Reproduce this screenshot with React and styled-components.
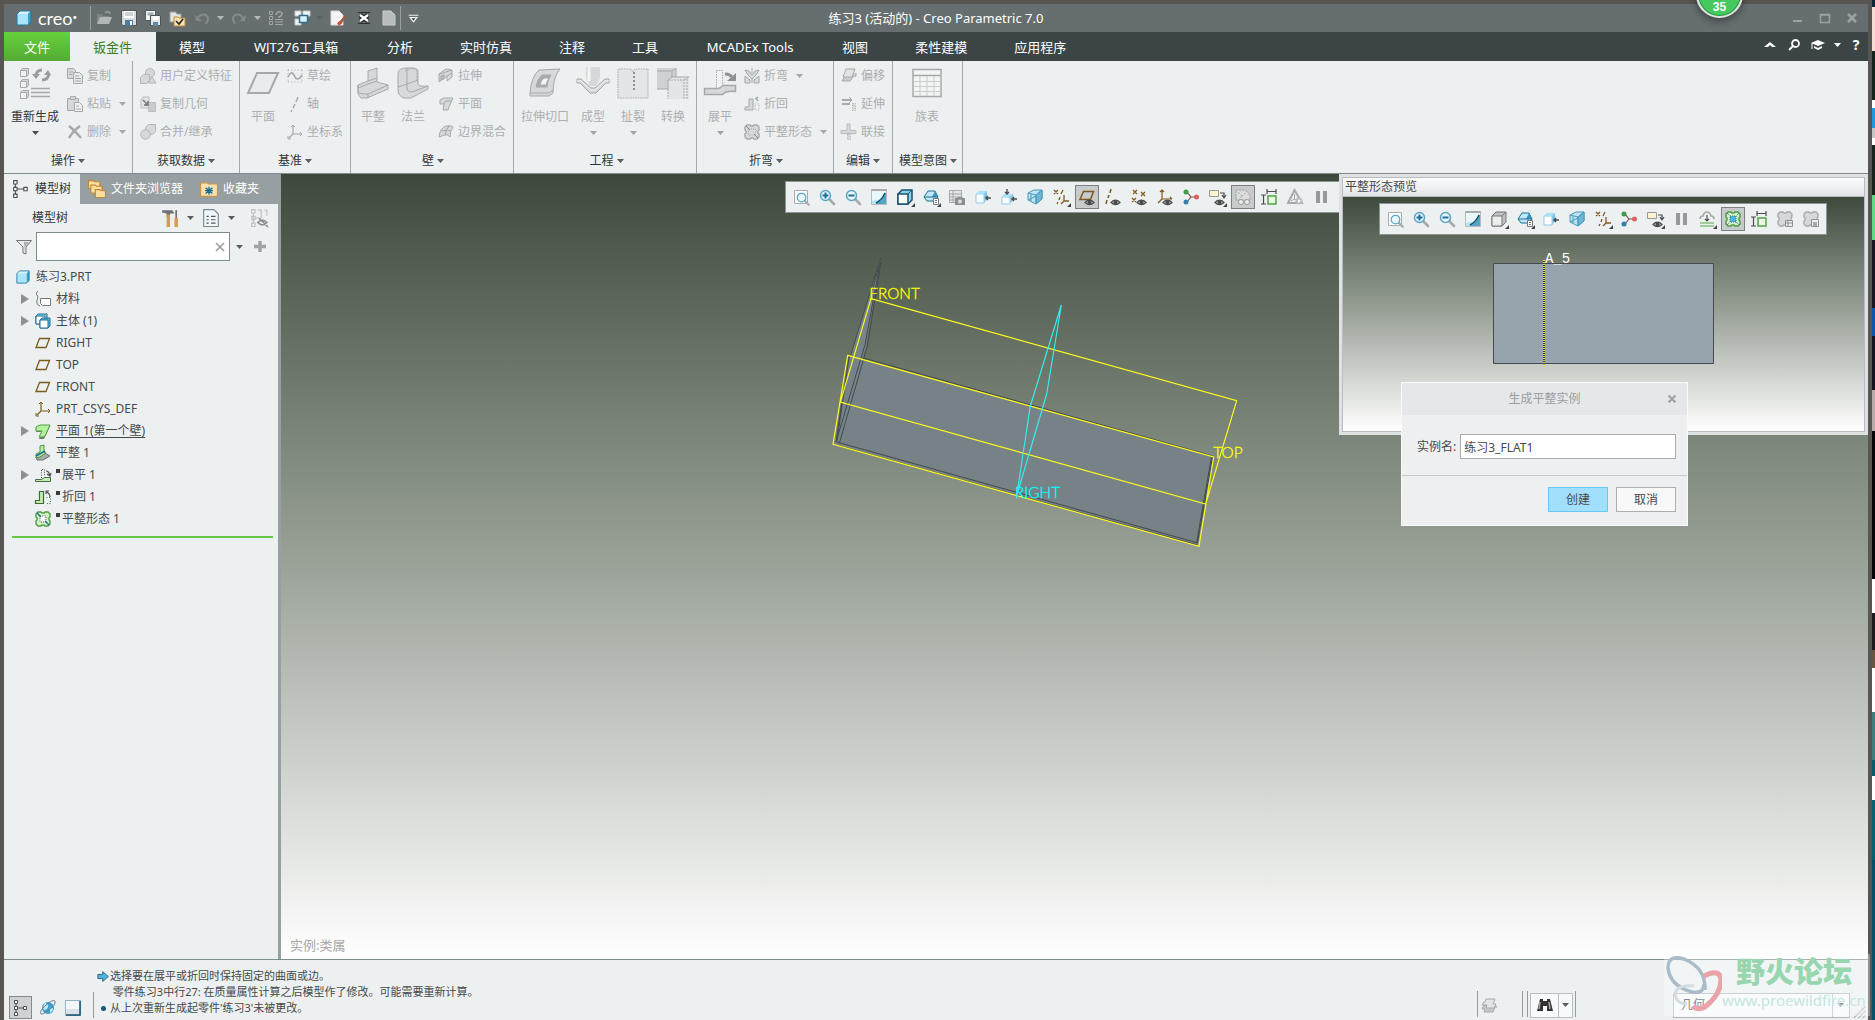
import React from "react";
import styled, { createGlobalStyle } from "styled-components";

const GlobalStyle = createGlobalStyle`
  *, *::before, *::after { box-sizing: border-box; }
  body {
    margin: 0;
    overflow: hidden;
    font-family: "Noto Sans", "Noto Sans CJK SC", sans-serif;
    font-size: 12px;
    line-height: 16px;
    color: #46494a;
    background: #575653;
  }
  button, input, select {
    font: inherit;
    color: inherit;
    margin: 0;
    padding: 0;
    border: 0;
    background: none;
  }
  ul { list-style: none; margin: 0; padding: 0; }
  svg { display: block; flex: none; }
`;

/* ---------- icons ---------- */

const G = "#a6a9aa";
const L = "#d6d9da";
const D = "#4c4c4c";
const BR = "#7d5a1e";
const BL = "#1f6f93";
const SKY = "#a9e2fa";

const miniEye = (
  <g>
    <path d="M6 13.500q4.500-4.500 9 0q-4.500 4-9 0z" fill="#f4f4f4" stroke={D} strokeWidth="1.200" />
    <circle cx="10.500" cy="13.300" r="2" fill={D} />
  </g>
);
const lens = (
  <g>
    <path d="M10 10l5 5" stroke="#a9a9a9" strokeWidth="2.600" strokeLinecap="round" />
    <circle cx="6.500" cy="6.500" r="5" fill="#e9f8ff" stroke="#5aa5c4" strokeWidth="1.500" />
  </g>
);
const flatOutline = "M1 3l2-2h3l1 1h2l1-1h3l2 2v3l-1 1v2l1 1v3l-2 2h-3l-1-1H7l-1 1H3l-2-2v-3l1-1V7L1 6z";

const glyphs = {
  /* title bar */
  cube: <g><path d="M1 4l3-3h11l-3 3z" fill="#d5f2fd" /><path d="M12 4l3-3v11l-3 3z" fill="#3e9fc6" /><path d="M1 4h11v11H1z" fill="#abe5fb" /><path d="M1 4l3-3h11v11l-3 3H1z" fill="none" stroke="#27789d" /></g>,
  open: <g><path d="M1 13V4h5l1 2h6v3" fill="#7f8688" /><path d="M1 14l3-7h12l-3 7z" fill="#b3b6b6" /><path d="M9 3q4-3 5 1" stroke="#9a9e9e" fill="none" strokeWidth="1.500" /></g>,
  save: <g><path d="M.5.5h15v15H2L.5 14z" fill="#d8dadb" stroke="#4d5456" /><path d="M3 1h10v7H3z" fill="#fff" /><path d="M4 3h8M4 5h8" stroke="#9aa3a8" /><path d="M4 10h8v6H4z" fill="#4a7ea0" /><path d="M9 11h2v4H9z" fill="#fff" /></g>,
  saveAs: <g><path d="M.5.5h10v10h-10z" fill="#f1f2f3" stroke="#555c5e" /><path d="M2.500 2.500h6v3h-6z" fill="#9db0bb" /><path d="M5.500 5.500h10v10h-10z" fill="#e4e6e8" stroke="#4d5456" /><path d="M7.500 6h6v4h-6z" fill="#fff" /><path d="M8 12h5v4H8z" fill="#5f8aa5" /></g>,
  folderCheck: <g><path d="M1 2h6l1 2h4v8H1z" fill="#e4e4e2" stroke="#9a9a98" /><path d="M5 7h4l1 1h6v8H5z" fill="#fbe2ae" stroke="#b98b3b" /><path d="M7 11l3 3 4-5" stroke="#222" fill="none" strokeWidth="1.600" /></g>,
  undo: <g fill="none" stroke="#84898a" strokeWidth="2"><path d="M3 9q4-6 9-4q4 3 0 9" /><path d="M1 5l1 6h6z" fill="#84898a" stroke="none" /></g>,
  redo: <g fill="none" stroke="#84898a" strokeWidth="2"><path d="M13 9Q9 3 4 5q-4 3 0 9" /><path d="M15 5l-1 6H8z" fill="#84898a" stroke="none" /></g>,
  regenSmall: <g stroke="#a1a6a6" fill="none"><path d="M1.500 1.500h3v3h-3zM1.500 6.500h3v3h-3zM1.500 11.500h3v3h-3z" /><path d="M7 9.500h8M7 12h8M7 14.500h8" /><path d="M8 5q1-4 5-3M14 2q0 5-4 5" strokeWidth="1.500" /></g>,
  windows: <g><path d="M1 1h6v5H1zM9 1h7v5H9zM1 9h6v6H1z" fill="#f2f4f5" stroke="#c5c9ca" /><path d="M5.500 5.500h8v7h-8z" fill="#d9f2fd" stroke="#2b6f8f" strokeWidth="1.500" /></g>,
  erase: <g><path d="M1 1h8l4 4v10H1z" fill="#f4f4f4" stroke="#d9d9d9" /><path d="M9 12l6-7 2 2-6 7z" fill="#9b5e47" /><path d="M7 13l3-2 2 2-3 3z" fill="#d5453c" /></g>,
  closeWin: <g><path d="M4 5l8 6M12 5l-8 6" stroke="#2c2f30" strokeWidth="5" /><path d="M4 5l8 6M12 5l-8 6" stroke="#fff" strokeWidth="2.200" /><path d="M2 2.500h12M2 13.500h12" stroke="#2c2f30" /></g>,
  newDoc: <path d="M2 1h8l4 4v10H2z" fill="#b9bcbc" stroke="#cbcdcd" />,
  overflow: <path d="M2 4h12M4 7l4 5 4-5z" stroke="#f2f2f2" strokeWidth="1.500" fill="#333" />,
  minimize: <path d="M3 11h9" stroke="#9da2a2" strokeWidth="2" />,
  maximize: <path d="M3.500 4.500h9v8h-9zM3 5h10" stroke="#9da2a2" strokeWidth="1.500" fill="none" />,
  closeX: <path d="M4 4l8 8M12 4l-8 8" stroke="#a0a3a4" strokeWidth="2.500" />,
  up: <path d="M2 10l6-5 6 5H10L8 8 6 10z" fill="#fff" />,
  search: <g fill="none" stroke="#fff"><circle cx="9.500" cy="6.500" r="3.500" strokeWidth="1.800" /><path d="M7 9l-4 4" strokeWidth="2" /></g>,
  learn: <g fill="#fff"><path d="M8 3l7 3-7 3-7-3z" /><path d="M4 9l4 2 4-2v2l-4 2-4-2z" /><path d="M2 6v6" stroke="#fff" /></g>,

  /* ribbon, small */
  copy: <g fill={L} stroke={G}><path d="M.5.5h6l2 2v8h-8z" /><path d="M6.500 4.500h6l3 3v8h-9z" fill="#e6e8e9" /><path d="M8 8h4M8 10.500h6M8 13h6M2 4h4M2 6.500h3" fill="none" /></g>,
  paste: <g fill={L} stroke={G}><path d="M.5 2.500h11v12H.5z" /><path d="M3.500.5h5v3h-5z" /><path d="M7.500 6.500h5l3 3v6h-8z" fill="#eef0f0" /><path d="M9 10h3M9 13h5" /></g>,
  remove: <path d="M2 2q5 4 12 12M13 2Q6 7 2 14" fill="none" stroke={G} strokeWidth="2.500" />,
  udf: <g fill={L} stroke="#b3b6b7"><circle cx="10" cy="5" r="4.500" /><path d="M.5 9.500l3-3h6v6l-3 3h-6z" /><path d="M8 15l4-6 4 6z" /></g>,
  copyGeom: <g fill="#e1e3e4" stroke="#bbbebf"><path d="M1 4l2-3h6v11H1z" /><path d="M8.500 6.500h7v9h-7z" fill="#c9cccd" /><path d="M3 4l5 5M8 5v4H4" stroke="#6f7273" strokeWidth="1.400" fill="none" /></g>,
  merge: <g fill={L} stroke="#b3b6b7"><path d="M5.500 3.500l3-3h7v7l-3 3h-7z" /><circle cx="5.500" cy="10.500" r="4.800" /></g>,
  sketch: <g fill="none" stroke={G}><path d="M1 2h14M1 14h14M1 2v12M15 2v12" strokeDasharray="1 2.200" /><path d="M1 9q3-7 6-2q3 8 8 0" strokeWidth="1.600" /></g>,
  axis: <path d="M11 1L9 6M8 8l-2 4M5 14l-1 2" stroke={G} strokeWidth="1.500" fill="none" />,
  csys: <g stroke={G} fill="none" strokeWidth="1.200"><path d="M6 1v9h9M6 10l-4 4" /><path d="M4 3l2-2 2 2M13 8l2 2-2 2M1 12v3h3" strokeWidth="1" /></g>,
  extrude: <g fill={L} stroke={G}><path d="M1 6l7-5 6 1v7l-5 4V8L1 14z" /><path d="M1 6l4-1 9-3M9 8l5-3" fill="none" /><path d="M3 8l3-1v4l-3 1z" fill="#b9bcbd" /></g>,
  planar: <g fill={L} stroke={G}><path d="M2 4l4-2h9l-4 9-1 3H5l1-6H2z" /><path d="M6 8l2-3h6" fill="none" /></g>,
  blend: <g fill={L} stroke={G}><path d="M1 13Q2 4 8 2q5-1 7 1q-3 4-3 10q-2-3-5-2q-3 1-6 2z" /><path d="M7 11q1-6 4-9M4 7q5-2 9 0" fill="none" /></g>,
  bend: <g fill={L} stroke={G}><path d="M1 2l4 1 3 4 3-4 4-1-3 5-4 4-4-4z" /><path d="M1 8l5 4v3H1zM15 8l-5 4v3h5zM8 11v4M8 0v5" /></g>,
  bendBack: <g fill={L} stroke={G}><path d="M1 11h4V3h4v11H1z" /><path d="M11 8h4v6h-4z" strokeDasharray="1 1.500" fill="none" /><path d="M12 2l2 3M11 3l3-2" strokeWidth="1.500" /></g>,
  flatPattern: <g fill={L} stroke={G}><path d={flatOutline} strokeWidth="1.400" /><path d="M4.500 5h7v6h-7z" fill="none" strokeDasharray="1 1.300" /><path d="M2 2l4 4M10 10l4 4" stroke="#888" /></g>,
  offset: <g fill={L} stroke={G}><path d="M4 8l-3 5h8l4-5h2V5" fill="#c9cccd" /><path d="M5 1h9l-3 8H2z" fill="#e1e3e4" /></g>,
  extend: <g fill="none" stroke={G}><path d="M1 4h9M1 8h8" strokeWidth="2" /><path d="M8 1l3 3-3 3" /><path d="M11.500 7.500h3v7h-3z" strokeDasharray="1 1.500" fill={L} /></g>,
  join: <g fill={L} stroke={G}><path d="M0 6.500h6V0h3v6.500h6v3H0z" stroke="#b9bcbd" /><path d="M6.500 10.500h3v5h-3z" strokeDasharray="1 1.500" /></g>,

  /* navigator */
  tree: <g fill="#fff" stroke={D}><path d="M3 3v10M4 8h8" fill="none" /><path d="M1.500.5h3v3h-3zM1.500 6.500h3v3h-3zM1.500 12.500h3v3h-3zM10.500 6.500h3v3h-3z" /></g>,
  folders: <g fill="#fbdf9f" stroke="#c0873a"><path d="M.5.5h4l1 1h5v6H.5z" /><path d="M2.500 4.500h4l1 1h5v6h-10z" /><path d="M6.500 8.500h4l1 1h4v6h-9z" /></g>,
  favorites: <g><path d="M.5 2.500h6l1 1h8v11H.5z" fill="#f8e1ae" stroke="#c5954c" /><path d="M8 6v7M5 7l6 5M11 7l-6 5M4.500 9.500h7" stroke={BL} strokeWidth="1.200" /></g>,
  tools: <g><path d="M1 1h9l2 3H8v3H5V4L1 3z" fill="#6e7173" /><path d="M5 5h3v11H5z" fill="#d49a4d" /><path d="M13.500 1v7" stroke="#707070" strokeWidth="1.500" /><path d="M12 8h3v8h-3z" fill="#d49a4d" /></g>,
  list: <g><path d="M1.500.5h9l4 4v11h-13z" fill="#eef7fc" stroke="#7f8688" /><path d="M4 6h2v1H4zM4 9h2v1H4zM4 12h2v1H4zM8 6h4v1H8zM8 9h4v1H8zM8 12h4v1H8z" fill="#555" /></g>,
  treeEye: <g fill="none" stroke="#bcc0c1"><path d="M1.500.5h3v3h-3zM1.500 6.500h3v3h-3zM1.500 12.500h3v3h-3zM3 3v10M7 1h3v7M13 1h2v5M4 8h4" /><path d="M7 12q4-4 8 0q-4 4-8 0zM8 8l8 8" stroke="#8b8e8f" strokeWidth="1.500" /></g>,
  filter: <g><path d="M.5 1.500h15L10 8v7l-3-1V8z" fill="#e9ebec" stroke="#727677" /><path d="M8 3h5L9 8v5" fill="#a9adae" /></g>,
  plus: <path d="M8 2v11M2 7.500h12" stroke="#a0a3a4" strokeWidth="3.500" />,
  clear: <path d="M4 4l8 8M12 4l-8 8" stroke="#9b9b9b" strokeWidth="1.500" />,
  material: <g fill="none" stroke="#777"><path d="M5.500 7.500h10v7h-8l-2-2z" fill="#fff" /><path d="M3 0q-3 2-1 4q2 2 0 5q-1 5 3 6" /></g>,
  body: <g stroke={BL} fill="#fff"><path d="M1 3l2-2h9v8l-2 2H1z" fill="#8fd3ef" /><path d="M1 3h9v8H1z" /><path d="M5 7l2-2h8v8l-2 2H5z" fill="#5cb7db" /><path d="M5 7h8v8H5z" /></g>,
  plane: <path d="M4.500 3.500h10l-3.500 9H1z" fill="none" stroke={BR} strokeWidth="1.300" />,
  csysBrown: <g stroke={BR} fill="none" strokeWidth="1.200"><path d="M6 1v9h9M6 10l-4 4" /><path d="M4 3l2-2 2 2M13 8l2 2-2 2M1 12v3h3" strokeWidth="1" /></g>,
  wall: <g><path d="M1 5l4-2h10l-4 9-2 4H4l3-7H1z" fill="#777b7c" /><path d="M1 4l4-2h10l-4 9-2 3H4l3-6H1z" fill="#b5f09b" stroke="#4f9a46" /></g>,
  flat: <g><path d="M1 12l9-4 5 3-7 4H2z" fill="#a7abac" stroke="#6b6f70" /><path d="M5 1l4-1v7l2 1-6 4-4 1V9l4-2z" fill="#b8efa2" stroke="#4f8e47" /><path d="M1 11l9-5" stroke={BL} strokeWidth="1.500" /></g>,
  unbend: <g><path d="M.5 12.500h6l3-2h6v4H.5z" fill="#c4efb2" stroke="#4d6a48" /><path d="M6.500 11V2.500h3v7" fill="none" stroke={D} strokeDasharray="1 1.300" /><path d="M11 4q3 0 4 5M12 7l3 2 1-3" fill="none" stroke={D} strokeWidth="1.200" /></g>,
  bendBackGreen: <g><path d="M.5 11.500h4v-9h4v12h-8z" fill="#c4efb2" stroke="#3f6a3a" strokeWidth="1.200" /><path d="M11.500 8.500h4v6h-5" fill="none" stroke="#4f7a4a" strokeDasharray="1 1.500" /><path d="M15 8q0-3-3-5M11 5V2h3" fill="none" stroke={D} strokeWidth="1.200" /></g>,
  flatGreen: <g><path d={flatOutline} fill="#d3f5c6" stroke="#4f9a46" strokeWidth="1.400" /><path d="M5 5h6v6H5z" fill="#fff" stroke={D} strokeDasharray="1 1.300" /><path d="M2 2l4 4M10 10l4 4" stroke={BL} strokeWidth="1.400" /></g>,

  /* view toolbars */
  zoomBox: <g><path d="M1.500 1.500h13v13h-13z" fill="#fff" stroke="#aaa" /><g transform="translate(3 3) scale(.85)">{lens}</g></g>,
  zoomIn: <g>{lens}<path d="M3.500 6.500h6M6.500 3.500v6" stroke={BL} strokeWidth="2" /></g>,
  zoomOut: <g>{lens}<path d="M3.500 6.500h6" stroke={BL} strokeWidth="2" /></g>,
  repaint: <g><path d="M.5.5h15v15H.5z" fill="#b6e5f8" stroke="#bbb" /><path d="M1 1h14v3q-4 6-9 7q-3 0-5 1z" fill="#e9f7fd" /><path d="M15 3v12H4q7-2 11-12z" fill="#4fa6c9" /><path d="M14 4q-3 7-9 10" stroke="#194c66" fill="none" strokeWidth="1.500" /><path d="M.5 1h15" stroke="#aaa" strokeWidth="2" /></g>,
  shaded: <g><path d="M1 5l4-4h10v10l-4 4H1z" fill="#8fd0ea" stroke="#1a536e" strokeWidth="1.500" /><path d="M1 5h10v10H1z" fill="#fff" stroke="#1a536e" strokeWidth="1.500" /><path d="M11 5l4-4" stroke="#1a536e" /></g>,
  shadedGray: <g><path d="M1 5l4-4h10v10l-4 4H1z" fill="#bfc2c3" stroke="#777" /><path d="M1 5h10v10H1z" fill="#eceeee" stroke="#777" /><path d="M11 5l4-4" stroke="#777" /></g>,
  savedView: <g><path d="M1 8l4-6h7l3 6-3 4H4z" fill="#bfe9fa" stroke={BL} /><path d="M9 8l3-6 3 6z" fill="#3c95bd" /><path d="M1 8h14" stroke={BL} /><path d="M10.500 9.500h5v6h-5z" fill="#fff" stroke="#777" /><path d="M12 11.500h2M12 13.500h2" stroke="#777" /></g>,
  viewMgr: <g><path d="M.5 1.500h12v12H.5z" fill="#e4e6e7" stroke={G} /><path d="M.5 5h12M.5 8h12M.5 11h12M4 2v12" stroke={G} /><path d="M6 9h2l1-1h4l1 1h2v7H6z" fill="#8d9091" /><circle cx="11" cy="12.500" r="2" fill="#ddd" /></g>,
  cubeArrow: <g><path d="M1 5l3-3h8v8l-3 4H1z" fill="#7fc6e6" /><path d="M1 5h8v9H1z" fill="#fff" stroke="#8fcde6" /><path d="M1 5l3-3h8l-3 3z" fill={SKY} /><path d="M16 9h-5M13 7l-2 2 2 2" stroke={D} strokeWidth="1.500" fill="none" /></g>,
  cubeArrows: <g><path d="M1 8l3-3h8v6l-3 4H1z" fill="#7fc6e6" /><path d="M1 8h8v7H1z" fill="#fff" stroke="#8fcde6" /><path d="M1 8l3-3h8l-3 3z" fill={SKY} /><path d="M16 10h-5M13 8l-2 2 2 2M6 0v5M4 3l2 2 2-2" stroke={D} strokeWidth="1.400" fill="none" /></g>,
  perspective: <g stroke="#4a9abd"><path d="M1 4l6-3h8v9l-6 5-8-4z" fill="#bde4f3" /><path d="M9 6l6-5v9l-6 5z" fill="#6fb6d4" /><path d="M1 4l8 2 6-5M9 6v9M4 5v7M1 11l8-4" fill="none" /></g>,
  datum: <g stroke={BR} fill="none" strokeWidth="1.300"><path d="M1 1l4 4M5 1L1 5M10 1L8 5M7 8l-1 3M5 13l-1 2M11 6v6h5M11 12l-3 3" /></g>,
  planeEye: <g><path d="M4.500 2.500h10l-3 8H1z" fill="none" stroke={BR} strokeWidth="1.500" />{miniEye}</g>,
  axisEye: <g><path d="M6 0L5 4M4 6l-1 3M2 11l-1 4" stroke={BR} strokeWidth="1.500" />{miniEye}</g>,
  pointEye: <g><path d="M2 1l4 4M6 1L2 5M10 3l4 4M14 3l-4 4M1 9l4 4M5 9l-4 4" stroke={BR} strokeWidth="1.300" />{miniEye}</g>,
  csysEye: <g><path d="M5 1v9h10M5 10l-4 4M3 3l2-2 2 2M13 8l2 2" stroke={BR} strokeWidth="1.200" fill="none" />{miniEye}</g>,
  spin: <g><path d="M4 3l4 5h5M4 13l4-5" stroke="#7a4b4b" fill="none" strokeWidth="1.200" /><circle cx="3" cy="3" r="2.500" fill="#3f9a4b" /><circle cx="13.500" cy="8" r="2.500" fill="#e0605f" /><circle cx="3" cy="13" r="2.500" fill="#3382ad" /></g>,
  annotation: <g><path d="M.5 1.500h9v6h-9z" fill="#fdf3d0" stroke="#999" /><path d="M11 4h4v4M13 6l2 3 2-3" stroke={D} fill="none" strokeWidth="1.200" />{miniEye}</g>,
  simulate: <g fill="none" stroke="#999"><path d="M1 1h8q5 2 6 6v4H1z" strokeDasharray="2 1" fill="#ddd" /><path d="M3 3l4 4 4-3M7 7l-3 3" strokeDasharray="1 1" /><circle cx="6" cy="13" r="2.500" fill="#eee" /><circle cx="12" cy="13" r="2.500" fill="#eee" /></g>,
  dims: <g fill="none" stroke={D}><path d="M6 0v5M15 0v5M6 2.500h9M0 6h5M0 15h5M2.500 6v9" strokeWidth="1.200" /><path d="M7 7h8v8H7z" fill="#eaf9e3" stroke="#54a146" strokeWidth="1.500" /></g>,
  triangle: <g><path d="M7.500 1L15 14H1z" fill="none" stroke={G} strokeWidth="2" /><path d="M7.500 5v5M4 12l3-2 4 2" stroke={G} fill="none" /><circle cx="12" cy="12" r="3.500" fill="#bbb" /><path d="M11 10l3 2-3 2z" fill="#fff" /></g>,
  pause: <path d="M3 2h4v12H3zM10 2h4v12h-4z" fill="#959a9b" />,
  bendOrder: <g fill="none"><path d="M1 8q0-3 3-3q1-4 4-4t4 4q3 0 3 3" stroke="#a5a8a5" strokeWidth="1.600" /><path d="M8 4v6M6 8l2 2 2-2" stroke={D} strokeWidth="1.200" /><path d="M1 12h14M1 15h14" stroke="#55a548" strokeWidth="1.200" /></g>,
  flatActive: <g><path d={flatOutline} fill="#d3f5c6" stroke="#4f9a46" strokeWidth="1.500" /><path d="M5 5h6v6H5z" fill="#4cb4e8" stroke={BL} strokeDasharray="1 1" /><path d="M2 2l3 3M11 11l3 3M14 2l-3 3M2 14l3-3" stroke={BL} strokeDasharray="1 1" /></g>,
  flatTable: <g><path d={flatOutline} fill={L} stroke={G} strokeWidth="1.300" /><path d="M8.500 9.500h7v6h-7zM8 12h8M11 9v7" fill="#eee" stroke="#8f9293" /></g>,
  flatSave: <g><path d={flatOutline} fill={L} stroke={G} strokeWidth="1.300" /><path d="M8.500 8.500h7v7h-7z" fill="#eee" stroke="#8f9293" /><path d="M10 11h4v4h-4z" fill="#aaa" /></g>,

  /* status bar */
  globe: <g><circle cx="8" cy="8" r="6" fill="#3d9fd0" /><path d="M5 3q4 1 3 4t-4 3q-2-3 1-7zM10 8q3-1 3 1t-3 4z" fill="#c6e8f6" /><path d="M1 14Q-1 11 6 5t9-4q1 4-6 9t-8 4z" fill="none" stroke="#6b7c88" /></g>,
  blank: <g><path d="M.5.5h15v15H.5z" fill="#f4f8fa" stroke="#8fb3c4" /><path d="M1 9h14v6H1z" fill="#d9e2e7" /><path d="M15 1v14H1" stroke="#12506f" strokeWidth="1.500" fill="none" /></g>,
  arrowRight: <path d="M1 5.500h6V2l7 6-7 6v-3.500H1z" fill="#53b4dc" stroke="#155a7c" />,
  geometry: <g fill={L} stroke={G}><path d="M3 8l-2 4h3l-1 3h9l2-5h2l-2-2z" fill="#c6c9ca" /><path d="M5 2h9l-2 5h3l-2 4H5l1-3H1l2-3h1z" fill="#e3e5e6" /></g>,
  binoculars: <g><path d="M3 2h3v2h4V2h3l3 12h-6V9H6v5H0z" fill="#333" /><path d="M3 5l-1 7M12 5l1 7" stroke="#aaa" strokeWidth="1.500" /></g>,
  grip: <path d="M15 2L2 15M15 7l-8 8M15 12l-3 3" stroke="#b4b8b9" strokeWidth="1.500" />,
  regenerate: <g stroke={G}><path d="M1.500 3.500l2-2h6v6l-2 2h-6zM1.500 14.500l2-2h6v6l-2 2h-6zM1.500 25.500l2-2h6v6l-2 2h-6z" fill="#d4d7d8" /><path d="M1.500 3.500h6v6h-6zM1.500 14.500h6v6h-6zM1.500 25.500h6v6h-6z" fill="#f0f1f1" /><path d="M12 21.500h19M12 25.500h19M12 29.500h19" strokeWidth="1.500" /><path d="M17 8q1-5 6-5M30 7q-1 6-7 6" strokeWidth="3" stroke="#9b9e9f" fill="none" /><path d="M13 7h8l-4 5zM25 8h7l-3-5z" fill="#9b9e9f" stroke="none" /></g>,
  bigPlane: <path d="M10 6h21l-9 20H1z" fill="#e9eced" stroke={G} strokeWidth="2" />,
  bigFlat: <g fill={L} stroke={G}><path d="M1 18l10-4V4l9-3v14l11 3v4L10 31H4l-3-4z" /><path d="M1 18v6q1 3 5 3h5l20-9M11 14l9-3M11 31v-4M1 21l10-4 9-3" fill="none" /></g>,
  bigFlange: <g fill={L} stroke={G}><path d="M1 7q0-6 8-6h7q5 0 5 4v12q1 3 10 2v3L14 31H7q-6-2-6-8z" /><path d="M10 1v20q0 4 5 4l16-6M1 20l9-3 11-4" fill="none" /><path d="M8 4q8-5 12 0v9" fill="none" strokeDasharray="2 1" /></g>,
  bigCut: <g fill={L} stroke={G}><path d="M10 3l21-1q-7 8-7 24l-4 3H1v-3Q2 10 10 3z" /><path d="M1 26h19l4-3" fill="none" /><path d="M13 8h9q-4 6-4 12H7q1-8 6-12z" fill="#a9acad" /><path d="M15 11h5q-2 3-3 7h-6q1-5 4-7z" fill="#f4f5f5" /></g>,
  bigForm: <g fill={L} stroke={G}><path d="M9 0h14v11l-4 8h-6l-4-8z" stroke="none" /><path d="M12 0v14" stroke="#f2f3f3" strokeWidth="3" /><path d="M0 12h4l10 9h4l10-9h4v4h-3L19 26h-6L3 16H0z" /><path d="M0 14h4l10 9h4l10-9h4" fill="none" stroke="#f2f3f3" /></g>,
  bigRip: <g fill="#e3e5e6" stroke={G}><path d="M1 2h13l2 3 2-3h13v29H1z" stroke="none" /><path d="M1 31V2h13l2 3 2-3h13v29z" strokeDasharray="1.500 1" /><path d="M17 5v18" stroke="#8f9293" strokeWidth="2" strokeDasharray="2 2" /></g>,
  bigConvert: <g fill={L} stroke={G}><path d="M0 1h19v9l-8 4v8H0z" fill="#cfd1d2" stroke="none" /><path d="M11 13l4-3h17v22H11z" fill="#e3e5e6" stroke="none" /><path d="M0 4h15v6M15 4l4-3v9M0 22h11V13l4-3h17" fill="none" /><path d="M11 13h16v19M27 13l5-3M30 12v20M11 22v10" fill="none" strokeDasharray="2 1" /></g>,
  bigUnbend: <g fill={L} stroke={G}><path d="M.5 21.500h14q3-1 4-3h13v6q-10-1-13 3H.5z" strokeWidth="1.500" /><path d="M12.500 21V3.500h6V18" strokeDasharray="1.500 1" fill="#f1f2f2" /><path d="M21 7q6 0 8 5" fill="none" stroke="#8f9293" strokeWidth="3" /><path d="M23 14h9V6z" fill="#8f9293" stroke="none" /></g>,
  bigTable: <g fill="#f3f4f4" stroke={G}><path d="M2 2.500h28v27H2z" strokeWidth="1.500" /><path d="M2 8.500h28" strokeWidth="1.500" /><path d="M2 14.500h28M2 19.500h28M2 24.500h28M9 9v20M16 9v20M23 9v20" fill="none" stroke="#c9cccd" /></g>,
};

const Icon = ({ name, size = 16, box = 16 }) => (
  <svg width={size} height={size} viewBox={`0 0 ${box} ${box}`} overflow="visible" aria-hidden="true">
    {glyphs[name]}
  </svg>
);

const Caret = ({ color = "#5a5c5d" }) => (
  <svg width="7" height="4" viewBox="0 0 7 4" aria-hidden="true"><path d="M0 0h7L3.500 4z" fill={color} /></svg>
);

/* ---------- frame ---------- */

const Desktop = styled.div`
  display: flex;
  height: 100vh;
`;
const Window = styled.div`
  flex: 1;
  min-width: 0;
  display: flex;
  flex-direction: column;
  padding: 4px 4px 0;
  background: #575653;
`;
const DesktopEdge = styled.div`
  width: 3px;
  background: linear-gradient(
    #0a2733 0 7px, #f6dcd4 7px 51px, #14241b 51px 100px, #fff 100px 108px, #1e98e0 108px 128px,
    #c5c5c5 128px 138px, #fff 138px 145px, #16241c 145px 195px, #62d985 195px 240px, #191722 240px 308px,
    #0c57ad 308px 336px, #16141f 336px 390px, #b9aba9 390px 431px, #06060a 431px 579px, #fff 579px 613px,
    #1d1a20 613px 650px, #66563f 650px 668px, #fff 668px 712px, #3f7f7d 712px 760px, #0a5c69 760px 776px,
    #fff 776px 800px, #05616e 800px 860px, #045068 860px
  );
`;

/* ---------- title bar ---------- */

const TitleBar = styled.header`
  display: grid;
  grid-template-columns: 1fr auto 1fr;
  align-items: center;
  height: 28px;
  background: #666e6f;
  color: #fff;
`;
const QuickAccess = styled.div`
  display: flex;
  align-items: center;
  height: 100%;
  padding-left: 12px;
`;
const Brand = styled.span`
  width: 52px;
  margin-left: 6px;
  font: 400 18px/24px Lato, sans-serif;
  sup { font-size: 8px; line-height: 8px; vertical-align: 5px; }
`;
const BarRule = styled.span`
  width: 1px;
  height: 24px;
  background: #9aa0a0;
`;
const QuickButton = styled.button`
  display: flex;
  align-items: center;
  justify-content: center;
  width: ${(p) => p.$w || 24}px;
  height: 24px;
`;
const WindowTitle = styled.h1`
  margin: 0;
  font-size: 13px;
  font-weight: 400;
  line-height: 20px;
`;
const WindowControls = styled.div`
  display: flex;
  justify-content: flex-end;
  gap: 3px;
  padding-right: 4px;
`;
const Badge = styled.div`
  position: absolute;
  top: -29px;
  right: 132px;
  width: 47px;
  height: 47px;
  padding-top: 26px;
  border: 2px solid #dfe6df;
  border-radius: 50%;
  background: #45c95f;
  box-shadow: inset 0 0 0 1px #2a8c42, 0 3px 8px rgba(0, 0, 0, 0.4);
  color: #fff;
  text-align: center;
  font: 700 12px/16px "Liberation Sans", sans-serif;
`;

const quickItems = [
  ["open", 26, "打开"], ["save", 24, "保存"], ["saveAs", 24, "另存为"], ["folderCheck", 24, "工作目录"],
  ["undo", 26, "撤消"], ["caret", 10, "撤消列表"], ["redo", 28, "重做"], ["caret", 8, "重做列表"],
  ["regenSmall", 30, "重新生成"], ["windows", 22, "窗口"], ["darkCaret", 12, "窗口列表"], ["erase", 26, "拭除"],
  ["closeWin", 26, "关闭"], ["newDoc", 23, "新建"],
];

function TitleSection() {
  return (
    <TitleBar>
      <QuickAccess>
        <Icon name="cube" />
        <Brand>creo<sup>•</sup></Brand>
        <BarRule />
        {quickItems.map(([name, w, label], i) => (
          <QuickButton key={i} $w={w} aria-label={label}>
            {name === "caret" ? <Caret color="#b5b9b9" /> : name === "darkCaret" ? <Caret color="#5a6061" /> : <Icon name={name} />}
          </QuickButton>
        ))}
        <BarRule />
        <QuickButton aria-label="自定义"><Icon name="overflow" size={13} /></QuickButton>
      </QuickAccess>
      <WindowTitle>练习3 (活动的) - Creo Parametric 7.0</WindowTitle>
      <WindowControls>
        <QuickButton aria-label="最小化"><Icon name="minimize" /></QuickButton>
        <QuickButton aria-label="最大化"><Icon name="maximize" /></QuickButton>
        <QuickButton aria-label="关闭窗口"><Icon name="closeX" /></QuickButton>
      </WindowControls>
    </TitleBar>
  );
}

/* ---------- ribbon ---------- */

const TabBar = styled.nav`
  display: flex;
  height: 29px;
  background: #3c4546;
`;
const Tab = styled.button`
  min-width: ${(p) => p.$w || 0}px;
  padding: ${(p) => (p.$kind === "file" ? "0 20px" : "0 24px 0 23px")};
  font-size: 13px;
  line-height: 28px;
  color: ${(p) => (p.$kind === "active" ? "#3c7d22" : "#fff")};
  background: ${(p) =>
    p.$kind === "file" ? "linear-gradient(#65d13c, #55ab34)" : p.$kind === "active" ? "#ecf0f1" : "none"};
  white-space: nowrap;
`;
const TabTools = styled.div`
  display: flex;
  align-items: center;
  margin-left: auto;
  padding-bottom: 4px;
  color: #fff;
`;
const Help = styled.span`
  font-size: 14px;
  font-weight: 700;
`;
const RibbonBar = styled.div`
  display: flex;
  height: 113px;
  background: #ecf0f1;
  border-bottom: 1px solid #7d8c8c;
`;
const Group = styled.section`
  display: flex;
  flex-direction: column;
  width: ${(p) => p.$w}px;
  padding: 1px 0 0 ${(p) => p.$pad || 0}px;
  border-right: 1px solid #a4a9aa;
`;
const GroupBody = styled.div`
  display: flex;
  flex: 1;
`;
const GroupLabel = styled.button`
  display: flex;
  align-items: center;
  justify-content: center;
  gap: 3px;
  height: 24px;
  line-height: 24px;
  color: #333637;
`;
const BigButton = styled.button`
  display: flex;
  flex-direction: column;
  align-items: center;
  align-self: flex-start;
  width: ${(p) => p.$w}px;
  padding-top: 5px;
  color: ${(p) => (p.$on ? "#333637" : "#acaeaf")};
  white-space: nowrap;
  span { margin: 10px 0 6px; }
`;
const SmallColumn = styled.div`
  display: flex;
  flex-direction: column;
  padding-left: ${(p) => p.$inset || 1}px;
`;
const SmallButton = styled.button`
  display: flex;
  align-items: center;
  gap: 4px;
  height: 28px;
  color: #acaeaf;
  white-space: nowrap;
  svg:last-child:not(:first-child) { margin-left: 4px; }
`;

const tabs = [
  ["文件", "file"], ["钣金件", "active"], ["模型"], ["WJT276工具箱", "", 135], ["分析"], ["实时仿真"], ["注释"],
  ["工具"], ["MCADEx Tools", "", 137], ["视图"], ["柔性建模"], ["应用程序"],
];

const groups = [
  { label: "操作", w: 129, big: [["regenerate", "重新生成", 62, "on"]], small: [["copy", "复制"], ["paste", "粘贴", 1], ["remove", "删除", 1]] },
  { label: "获取数据", w: 107, inset: 7, big: [], small: [["udf", "用户定义特征"], ["copyGeom", "复制几何"], ["merge", "合并/继承"]] },
  { label: "基准", w: 111, big: [["bigPlane", "平面", 46]], small: [["sketch", "草绘"], ["axis", "轴"], ["csys", "坐标系"]] },
  { label: "壁", w: 163, pad: 2, inset: 5, big: [["bigFlat", "平整", 40], ["bigFlange", "法兰", 40]], small: [["extrude", "拉伸"], ["planar", "平面"], ["blend", "边界混合"]] },
  { label: "工程", w: 183, pad: 3, big: [["bigCut", "拉伸切口", 56], ["bigForm", "成型", 40, "menu"], ["bigRip", "扯裂", 40, "menu"], ["bigConvert", "转换", 40]], small: [] },
  { label: "折弯", w: 137, pad: 2, inset: 3, big: [["bigUnbend", "展平", 42, "menu"]], small: [["bend", "折弯", 1], ["bendBack", "折回"], ["flatPattern", "平整形态", 1]] },
  { label: "编辑", w: 59, inset: 7, big: [], small: [["offset", "偏移"], ["extend", "延伸"], ["join", "联接"]] },
  { label: "模型意图", w: 70, pad: 1, big: [["bigTable", "族表", 66]], small: [] },
];

function Ribbon() {
  return (
    <>
      <TabBar>
        {tabs.map(([label, kind, w]) => <Tab key={label} $kind={kind} $w={w}>{label}</Tab>)}
        <TabTools>
          <QuickButton aria-label="最小化功能区"><Icon name="up" /></QuickButton>
          <QuickButton aria-label="搜索"><Icon name="search" /></QuickButton>
          <QuickButton aria-label="学习"><Icon name="learn" /></QuickButton>
          <QuickButton $w={14} aria-label="学习列表"><Caret color="#fff" /></QuickButton>
          <QuickButton aria-label="帮助"><Help>?</Help></QuickButton>
        </TabTools>
      </TabBar>
      <RibbonBar>
        {groups.map((g) => (
          <Group key={g.label} $w={g.w} $pad={g.pad}>
            <GroupBody>
              {g.big.map(([icon, label, w, mode]) => (
                <BigButton key={label} $w={w} $on={mode === "on"}>
                  <Icon name={icon} size={32} box={32} />
                  <span>{label}</span>
                  {mode && <Caret color={mode === "on" ? "#4a4c4d" : "#9fa2a3"} />}
                </BigButton>
              ))}
              <SmallColumn $inset={g.inset}>
                {g.small.map(([icon, label, menu]) => (
                  <SmallButton key={label}>
                    <Icon name={icon} />
                    <span>{label}</span>
                    {menu && <Caret color="#a6a9aa" />}
                  </SmallButton>
                ))}
              </SmallColumn>
            </GroupBody>
            <GroupLabel>{g.label}<Caret /></GroupLabel>
          </Group>
        ))}
      </RibbonBar>
    </>
  );
}

/* ---------- navigator ---------- */

const Workspace = styled.div`
  display: flex;
  flex: 1;
  min-height: 0;
`;
const Navigator = styled.aside`
  display: flex;
  flex-direction: column;
  width: 277px;
  border-right: 3px solid #96a0a3;
  background: #ecf0f1;
`;
const NavTabs = styled.div`
  display: flex;
  height: 30px;
  background: #96a0a3;
`;
const NavTab = styled.button`
  display: flex;
  align-items: center;
  gap: 5px;
  padding: 0 9px 0 8px;
  color: ${(p) => (p.$active ? "#333637" : "#fff")};
  background: ${(p) => (p.$active ? "#ecf0f1" : "none")};
  white-space: nowrap;
`;
const NavHeader = styled.div`
  display: flex;
  align-items: center;
  height: 28px;
  padding: 0 10px 0 28px;
  color: #333637;
`;
const NavTools = styled.div`
  display: flex;
  align-items: center;
  gap: 8px;
  margin-left: auto;
  svg:last-child { margin-left: 7px; }
`;
const SearchRow = styled.div`
  display: grid;
  grid-template-columns: 16px minmax(0, 1fr) 9px 21px;
  column-gap: 4px;
  align-items: center;
  padding: 0 10px 0 12px;
  > svg { justify-self: end; }
`;
const SearchBox = styled.label`
  display: flex;
  align-items: center;
  height: 29px;
  padding-right: 1px;
  border: 1px solid #7d8c8c;
  background: #fff;
  input { flex: 1; min-width: 0; height: 100%; padding: 0 4px; outline: none; }
`;
const AddButton = styled.button`
  display: flex;
  justify-content: flex-end;
`;
const Tree = styled.ul`
  margin: 5px 5px 0 8px;
  padding-bottom: 6px;
  border-bottom: 2px solid #62c843;
`;
const TreeRow = styled.li`
  display: flex;
  align-items: center;
  height: 22px;
  gap: ${(p) => (p.$root ? 6 : 5)}px;
  padding-left: ${(p) => (p.$root ? 4 : 9)}px;
  span { text-decoration: ${(p) => (p.$current ? "underline" : "none")}; text-underline-offset: 2px; }
`;
const Toggle = styled.button`
  width: 9px;
  height: 10px;
`;
const Mark = styled.i`
  align-self: flex-start;
  width: 4px;
  height: 4px;
  margin: 5px -3px 0 0;
  background: #3c3c3c;
`;

const nodes = [
  ["material", "材料", { open: 1 }], ["body", "主体 (1)", { open: 1 }], ["plane", "RIGHT"], ["plane", "TOP"], ["plane", "FRONT"],
  ["csysBrown", "PRT_CSYS_DEF"], ["wall", "平面 1(第一个壁)", { open: 1, current: 1 }], ["flat", "平整 1"],
  ["unbend", "展平 1", { open: 1, mark: 1 }], ["bendBackGreen", "折回 1", { mark: 1 }], ["flatGreen", "平整形态 1", { mark: 1 }],
];

function NavigatorPanel() {
  return (
    <Navigator>
      <NavTabs>
        <NavTab $active><Icon name="tree" size={18} />模型树</NavTab>
        <NavTab><Icon name="folders" size={18} />文件夹浏览器</NavTab>
        <NavTab><Icon name="favorites" size={18} />收藏夹</NavTab>
      </NavTabs>
      <NavHeader>
        模型树
        <NavTools>
          <Icon name="tools" size={18} /><Caret /><Icon name="list" size={18} /><Caret /><Icon name="treeEye" size={18} />
        </NavTools>
      </NavHeader>
      <SearchRow>
        <Icon name="filter" />
        <SearchBox><input aria-label="过滤" /><Icon name="clear" /></SearchBox>
        <Caret />
        <AddButton aria-label="添加"><Icon name="plus" /></AddButton>
      </SearchRow>
      <Tree>
        <TreeRow $root><Icon name="cube" size={14} /><span>练习3.PRT</span></TreeRow>
        {nodes.map(([icon, label, o = {}]) => (
          <TreeRow key={label} $current={o.current}>
            <Toggle aria-label={`展开 ${label}`} disabled={!o.open}>
              {o.open && <svg width="8" height="10" viewBox="0 0 8 10"><path d="M0 0l8 5-8 5z" fill="#8d9091" /></svg>}
            </Toggle>
            <Icon name={icon} />
            {o.mark && <Mark />}
            <span>{label}</span>
          </TreeRow>
        ))}
      </Tree>
    </Navigator>
  );
}

/* ---------- graphics area ---------- */

const shade = "linear-gradient(#3d4a3b, #9ba399 50%, #ffffff)";

const Viewport = styled.main`
  position: relative;
  flex: 1;
  min-width: 0;
  background: ${shade};
`;
const FloatingModel = styled.svg`
  position: absolute;
  left: 519px;
  top: 66px;
`;
const InstanceNote = styled.div`
  position: absolute;
  left: 9px;
  bottom: 6px;
  font-size: 13px;
  color: #a8a8a8;
`;
const Toolbar = styled.div`
  display: flex;
  align-items: center;
  gap: 2px;
  height: 32px;
  padding: 0 3px;
  border: 1px solid #8b9496;
  background: #ecf0f1;
`;
const ViewToolbar = styled(Toolbar)`
  position: absolute;
  top: 7px;
  right: 529px;
  padding-right: 6px;
  border-right: 0;
`;
const ToolButton = styled.button`
  position: relative;
  display: flex;
  align-items: center;
  justify-content: center;
  width: 24px;
  height: 24px;
  border: 1px solid ${(p) => (p.$active ? "#7c8082" : "transparent")};
  background: ${(p) => (p.$active ? "#c8cbcc" : "none")};
`;
const CornerMark = styled.i`
  position: absolute;
  right: 1px;
  bottom: 1px;
  border-style: solid;
  border-width: 0 0 4px 4px;
  border-color: transparent transparent #444;
`;

const viewTools = [
  "zoomBox", "zoomIn", "zoomOut", "repaint", "shaded+", "savedView+", "viewMgr", "cubeArrow", "cubeArrows", "perspective",
  "datum+", "planeEye*", "axisEye", "pointEye", "csysEye", "spin", "annotation+", "simulate*", "dims", "triangle", "pause",
];
const previewTools = [
  "zoomBox", "zoomIn", "zoomOut", "repaint", "shadedGray+", "savedView+", "cubeArrow", "perspective", "datum+", "spin",
  "annotation+", "pause", "bendOrder+", "flatActive*", "dims", "flatTable", "flatSave",
];

const Tools = ({ items }) =>
  items.map((item) => {
    const name = item.replace(/[+*]/, "");
    return (
      <ToolButton key={item} $active={item.endsWith("*")} aria-label={name}>
        <Icon name={name} />
        {item.endsWith("+") && <CornerMark />}
      </ToolButton>
    );
  });

const Model = () => (
  <FloatingModel width="470" height="320" viewBox="0 0 1410 960" fill="none" strokeWidth="3" aria-label="模型">
    <path d="M148 348L1238 650L1194 915L106 610z" fill="#778287" />
    <path d="M242 54L148 355L106 608L116 608L198 318L244 56z" fill="#77838a" />
    <g stroke="#45494c">
      <path d="M242 54L152 346M244 56L202 318L118 610M240 70L195 314L108 606M236 80L218 150" />
      <path d="M190 354L1238 648L1192 910M1234 652L1190 908L110 606L148 348M104 614L1192 915M125 490L108 606" />
    </g>
    <path d="M213 176L1310 482L1217 792L121 486zM143 346L1241 651L1197 919L99 613z" stroke="#fbfa20" strokeWidth="3.500" />
    <path d="M784 195L691 498L650 768L740 462z" stroke="#35eeee" strokeWidth="3.500" />
    <g fontFamily="Lato, sans-serif" fontWeight="300" fontSize="46">
      <text x="208" y="177" fill="#ffff00" stroke="#ffff00" strokeWidth="1">FRONT</text>
      <text x="1240" y="654" fill="#ffff00" stroke="#ffff00" strokeWidth="1">TOP</text>
      <text x="645" y="774" fill="#00ffff" stroke="#00ffff" strokeWidth="1">RIGHT</text>
    </g>
  </FloatingModel>
);

/* ---------- preview window ---------- */

const Preview = styled.section`
  position: absolute;
  top: 0;
  right: 0;
  display: flex;
  flex-direction: column;
  width: 529px;
  height: 261px;
  padding: 3px;
  background: #dfe1e4;
`;
const PreviewTitle = styled.h2`
  height: 20px;
  margin: 0;
  padding-left: 2px;
  border: 1px solid #b9bdc2;
  background: linear-gradient(#fcfcfd, #e2e4e6);
  font-size: 12px;
  font-weight: 400;
  line-height: 17px;
`;
const PreviewCanvas = styled.div`
  display: flex;
  flex-direction: column;
  align-items: center;
  flex: 1;
  padding: 6px 2px 0 0;
  border: 1px solid #b9bdc2;
  border-top: 0;
  background: ${shade};
`;
const FlatShape = styled.svg`
  margin-top: 15px;
  font-family: "Liberation Mono", monospace;
  font-size: 14px;
`;

/* ---------- dialog ---------- */

const Dialog = styled.form`
  position: absolute;
  top: 208px;
  right: 180px;
  width: 287px;
  border: 1px solid #fafafa;
  background: #eeeff1;
`;
const DialogTitle = styled.div`
  display: grid;
  grid-template-columns: 24px 1fr 24px;
  align-items: center;
  height: 32px;
  padding: 0 3px;
  background: #e5e7e9;
  color: #9b9d9f;
  text-align: center;
`;
const DialogClose = styled.button`
  display: flex;
  justify-content: center;
`;
const Field = styled.div`
  display: flex;
  align-items: center;
  gap: 4px;
  padding: 19px 11px 16px 15px;
  border-bottom: 1px solid #c5c8ca;
  input {
    flex: 1;
    min-width: 0;
    height: 25px;
    padding: 0 3px;
    border: 1px solid #a9acae;
    background: #fff;
  }
`;
const Actions = styled.div`
  display: flex;
  justify-content: flex-end;
  gap: 8px;
  padding: 11px 11px 13px;
`;
const ActionButton = styled.button`
  width: 60px;
  height: 25px;
  border: 1px solid ${(p) => (p.$primary ? "#66c8f6" : "#abaeb0")};
  background: ${(p) => (p.$primary ? "#a2dffd" : "#f8f8f8")};
`;

function PreviewWindow() {
  return (
    <Preview>
      <PreviewTitle>平整形态预览</PreviewTitle>
      <PreviewCanvas>
        <Toolbar><Tools items={previewTools} /></Toolbar>
        <FlatShape width="222" height="122" viewBox="0 0 222 122" aria-label="展平图">
          <path d="M1.500 13.500h220v100H1.500z" fill="#98a4ad" stroke="#444a4e" />
          <path d="M52 11v104" stroke="#3e4234" strokeWidth="2" />
          <path d="M52 10v107" stroke="#d8d23e" strokeWidth="2" strokeDasharray="1 1" />
          <text x="53" y="13" fill="#fff">A_5</text>
        </FlatShape>
      </PreviewCanvas>
    </Preview>
  );
}

function InstanceDialog() {
  return (
    <Dialog onSubmit={(e) => e.preventDefault()}>
      <DialogTitle>
        <span />生成平整实例<DialogClose type="button" aria-label="关闭"><Icon name="closeX" size={14} /></DialogClose>
      </DialogTitle>
      <Field>
        <label htmlFor="instance-name">实例名:</label>
        <input id="instance-name" defaultValue="练习3_FLAT1" />
      </Field>
      <Actions>
        <ActionButton $primary>创建</ActionButton>
        <ActionButton type="button">取消</ActionButton>
      </Actions>
    </Dialog>
  );
}

/* ---------- status bar ---------- */

const StatusBar = styled.footer`
  position: relative;
  display: flex;
  align-items: flex-end;
  height: 61px;
  border-top: 1px solid #7d8c8c;
  background: #ecf0f1;
`;
const StatusToggles = styled.div`
  display: flex;
  align-items: center;
  gap: 7px;
  padding: 0 11px 1px 5px;
`;
const StatusToggle = styled.button`
  display: flex;
  align-items: center;
  justify-content: center;
  width: ${(p) => (p.$active ? 23 : 18)}px;
  height: 23px;
  border: 1px solid ${(p) => (p.$active ? "#85898a" : "transparent")};
  background: ${(p) => (p.$active ? "#cfd2d3" : "none")};
`;
const StatusRule = styled.span`
  width: 1px;
  height: 26px;
  margin-bottom: 2px;
  margin-left: ${(p) => p.$before || 0}px;
  background: #969b9c;
`;
const Messages = styled.ul`
  padding: 0 0 4px 3px;
  font-size: 11px;
  line-height: 16px;
`;
const Message = styled.li`
  display: grid;
  grid-template-columns: 13px auto;
  align-items: center;
  justify-items: start;
`;
const Dot = styled.i`
  width: 5px;
  height: 5px;
  margin-left: 4px;
  border-radius: 50%;
  background: #17587c;
`;
const StatusRight = styled.div`
  display: flex;
  align-items: center;
  margin-left: auto;
  padding-bottom: 1px;
  padding-right: 18px;
`;
const FindBox = styled.div`
  display: flex;
  height: 25px;
  margin: 0 2px;
  border: 1px solid #b9bfc2;
  background: #f8f9fa;
`;
const FindButton = styled.button`
  display: flex;
  align-items: center;
  justify-content: center;
  width: ${(p) => p.$w}px;
  & + & { border-left: 1px solid #b9bfc2; }
`;
const FilterSelect = styled.div`
  display: flex;
  align-items: center;
  width: 177px;
  height: 25px;
  margin-left: 97px;
  padding-right: 5px;
  border: 1px solid #b2b7b9;
  background: #f8f9fa;
  select { flex: 1; height: 100%; padding-left: 7px; appearance: none; border-right: 1px solid #b9bfc2; margin-right: 4px; }
`;
const ResizeGrip = styled.div`
  position: absolute;
  right: 2px;
  bottom: 1px;
`;
const Watermark = styled.div`
  position: absolute;
  top: -6px;
  right: -2px;
  display: flex;
  width: 206px;
  height: 62px;
  background: rgba(255, 255, 255, 0.35);
  pointer-events: none;
`;
const WatermarkText = styled.div`
  display: flex;
  flex-direction: column;
  align-items: center;
  gap: 4px;
  strong { font: 900 29px/32px "Noto Sans CJK SC", sans-serif; color: #98d6b0; }
  span { font-size: 15px; line-height: 20px; color: #c3e6e2; }
`;

function Status() {
  return (
    <StatusBar>
      <StatusToggles>
        <StatusToggle $active aria-label="模型树"><Icon name="tree" /></StatusToggle>
        <StatusToggle aria-label="浏览器"><Icon name="globe" /></StatusToggle>
        <StatusToggle aria-label="全屏"><Icon name="blank" /></StatusToggle>
      </StatusToggles>
      <StatusRule />
      <Messages>
        <Message><Icon name="arrowRight" size={13} /><span>选择要在展平或折回时保持固定的曲面或边。</span></Message>
        <Message><b /><span>&nbsp;零件练习3中行27: 在质量属性计算之后模型作了修改。可能需要重新计算。</span></Message>
        <Message><Dot /><span>从上次重新生成起零件'练习3'未被更改。</span></Message>
      </Messages>
      <StatusRight>
        <StatusRule /><FindButton $w={22} aria-label="几何选择"><Icon name="geometry" /></FindButton>
        <StatusRule $before={22} /><StatusRule $before={4} />
        <FindBox>
          <FindButton $w={27} aria-label="查找"><Icon name="binoculars" /></FindButton>
          <FindButton $w={14} aria-label="查找列表"><Caret /></FindButton>
        </FindBox>
        <StatusRule />
        <FilterSelect>
          <select aria-label="选择过滤器"><option>几何</option></select>
          <Caret />
        </FilterSelect>
      </StatusRight>
      <ResizeGrip><Icon name="grip" size={14} /></ResizeGrip>
      <Watermark>
        <svg width="58" height="60" viewBox="0 0 58 60" fill="none">
          <path d="M41 36Q42 14 20 5Q4 0 4 14q2 18 24 24q12 2 12-8" stroke="#abbcc9" strokeWidth="3.500" />
          <path d="M40 22q16-8 17 4q0 14-16 27q-8 4-12-1" stroke="#eaa3a8" strokeWidth="5" />
          <path d="M30 32q-18-2-19 9q2 9 12 9" stroke="#d3dbe0" strokeWidth="3" />
        </svg>
        <WatermarkText>
          <strong>野火论坛</strong>
          <span>www.proewildfire.cn</span>
        </WatermarkText>
      </Watermark>
    </StatusBar>
  );
}

export default function App() {
  return (
    <Desktop>
      <GlobalStyle />
      <Window>
        <TitleSection />
        <Ribbon />
        <Workspace>
          <NavigatorPanel />
          <Viewport>
            <Model />
            <ViewToolbar><Tools items={viewTools} /></ViewToolbar>
            <PreviewWindow />
            <InstanceDialog />
            <InstanceNote>实例:类属</InstanceNote>
          </Viewport>
        </Workspace>
        <Status />
      </Window>
      <DesktopEdge />
      <Badge>35</Badge>
    </Desktop>
  );
}
